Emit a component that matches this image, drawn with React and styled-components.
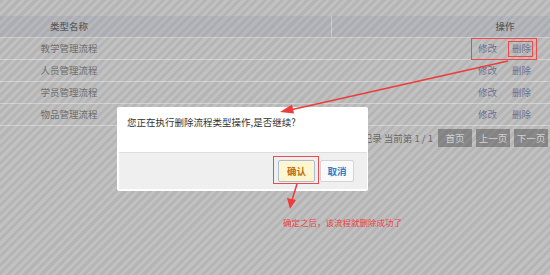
import React from "react";
import styled, { createGlobalStyle } from "styled-components";

const Global = createGlobalStyle`
  html, body { margin: 0; padding: 0; }
  body { font-family: "Noto Sans CJK SC", "Noto Sans", sans-serif; }
`;

const Page = styled.div`
  position: relative;
  width: 550px;
  height: 275px;
  overflow: hidden;
  padding-top: 16px;
  box-sizing: border-box;
  background: repeating-linear-gradient(
    135deg,
    #b5b5b5 0px,
    #b5b5b5 3px,
    #c1c1c1 3px,
    #c1c1c1 6px
  );
  font-size: 9.5px;
`;

const Table = styled.div`
  display: grid;
  grid-template-columns: 138px 193px 129px 90px;
`;

const HeadCell = styled.div`
  height: 21px;
  line-height: 21px;
  text-align: center;
  color: #5c5c5c;
  font-weight: 500;
  background: rgba(130, 136, 165, 0.18);
  border-bottom: 1px solid rgba(255, 255, 255, 0.35);
  border-left: ${(p) => (p.$sep ? "1px solid rgba(255,255,255,0.35)" : "none")};
`;

const Cell = styled.div`
  height: 21px;
  line-height: 21px;
  text-align: center;
  color: #6e6e6e;
  border-bottom: 1px solid rgba(255, 255, 255, 0.35);
`;

const Actions = styled(Cell)`
  display: flex;
  justify-content: center;
  gap: 15px;
  padding-right: 1px;
`;

const Link = styled.span`
  color: #6c7395;
`;

const Pager = styled.div`
  display: flex;
  justify-content: flex-end;
  align-items: center;
  gap: 4px;
  padding: 3px 2px 0 0;
`;

const PagerText = styled.span`
  color: #6a6a6a;
  margin-right: 1px;
`;

const PageBtn = styled.div`
  width: 34px;
  height: 18px;
  line-height: 18px;
  text-align: center;
  color: #d2d2d2;
  background: rgba(70, 70, 70, 0.45);
`;

const Dialog = styled.div`
  position: absolute;
  left: 117px;
  top: 107px;
  width: 251px;
  background: #fff;
  border-radius: 2px;
  padding: 0 1px 2px 2px;
  box-sizing: border-box;
`;

const Message = styled.div`
  height: 45px;
  padding: 8px 0 0 8px;
  box-sizing: border-box;
  color: #333;
  font-size: 9.5px;
`;

const Footer = styled.div`
  height: 36px;
  background: #efefef;
  border-top: 1px solid #dedede;
  display: flex;
  justify-content: flex-end;
  align-items: center;
  gap: 5px;
  padding-right: 13px;
`;

const Btn = styled.div`
  width: ${(p) => p.$w}px;
  height: 22px;
  line-height: 20px;
  box-sizing: border-box;
  text-align: center;
  font-weight: bold;
  font-size: 9.5px;
  border-radius: 2px;
  border: 1px solid ${(p) => (p.$primary ? "#a9bcd6" : "#d4d4d4")};
  background: ${(p) => (p.$primary ? "#fff5cf" : "#fafafa")};
  color: ${(p) => (p.$primary ? "#c0700a" : "#2d7fc8")};
`;

const RedBox = styled.div`
  position: absolute;
  border: 1px solid #ee4a4a;
  box-sizing: border-box;
`;

const Overlay = styled.svg`
  position: absolute;
  left: 0;
  top: 0;
  pointer-events: none;
`;

const Note = styled.div`
  position: absolute;
  left: 283px;
  top: 216px;
  color: #ee4444;
  font-size: 8.5px;
  white-space: nowrap;
`;

const rows = ["教学管理流程", "人员管理流程", "学员管理流程", "物品管理流程"];

export default function App() {
  return (
    <>
      <Global />
      <Page>
        <Table>
          <HeadCell>类型名称</HeadCell>
          <HeadCell />
          <HeadCell $sep />
          <HeadCell>操作</HeadCell>
          {rows.map((r) => (
            <React.Fragment key={r}>
              <Cell>{r}</Cell>
              <Cell />
              <Cell />
              <Actions>
                <Link>修改</Link>
                <Link>删除</Link>
              </Actions>
            </React.Fragment>
          ))}
        </Table>
        <Pager>
          <PagerText>共 4 条记录 当前第 1 / 1</PagerText>
          <PageBtn>首页</PageBtn>
          <PageBtn>上一页</PageBtn>
          <PageBtn>下一页</PageBtn>
        </Pager>

        <RedBox style={{ left: 471, top: 38, width: 66, height: 22 }} />
        <RedBox style={{ left: 508, top: 41, width: 25, height: 16 }} />

        <Dialog>
          <Message>您正在执行删除流程类型操作,是否继续?</Message>
          <Footer>
            <Btn $primary $w={37}>确认</Btn>
            <Btn $w={34}>取消</Btn>
          </Footer>
        </Dialog>

        <RedBox style={{ left: 273, top: 156, width: 46, height: 28 }} />

        <Overlay width="550" height="275" viewBox="0 0 550 275">
          <line x1="508" y1="61" x2="290" y2="110" stroke="#ee3b3b" strokeWidth="1.5" />
          <polygon points="280,112 292,104.5 294,113.5" fill="#ee3b3b" />
          <line x1="297" y1="184" x2="292" y2="200" stroke="#ee3b3b" strokeWidth="1.5" />
          <polygon points="290,209 287,198 296,200" fill="#ee3b3b" />
        </Overlay>

        <Note>确定之后，该流程就删除成功了</Note>
      </Page>
    </>
  );
}
